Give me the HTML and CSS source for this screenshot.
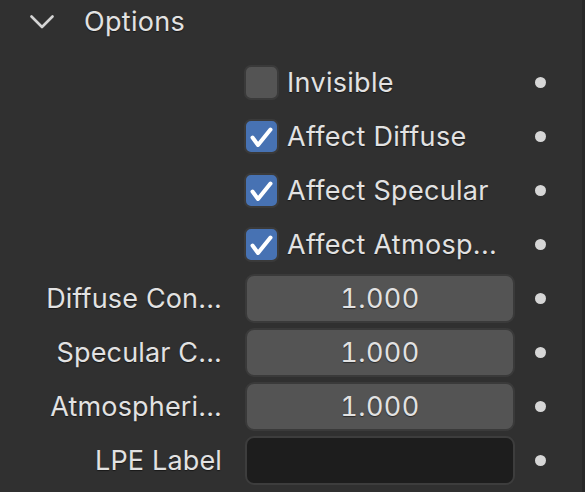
FILE: index.html
```html
<!DOCTYPE html>
<html>
<head>
<meta charset="utf-8">
<link rel="stylesheet" href="styles.css">
</head>
<body>
<div class="panel">
  <div class="header">
    <svg class="chev" width="24" height="14" viewBox="0 0 24 14"><path d="M1.5 1.5 L12 12 L22.5 1.5" fill="none" stroke="#d4d4d4" stroke-width="2.6" stroke-linecap="round" stroke-linejoin="round"/></svg>
    <span class="title">Options</span>
  </div>
  <div class="props">
    <div class="row">
      <div class="label"></div>
      <div class="ctrl check"><span class="cb"></span><span class="cbtext">Invisible</span></div>
      <span class="dot"></span>
    </div>
    <div class="row">
      <div class="label"></div>
      <div class="ctrl check"><span class="cb on"><svg width="35" height="35" viewBox="0 0 35 35"><path d="M8.5 18.5 L14 26 L26.5 10.5" fill="none" stroke="#fff" stroke-width="4" stroke-linecap="round" stroke-linejoin="round"/></svg></span><span class="cbtext">Affect Diffuse</span></div>
      <span class="dot"></span>
    </div>
    <div class="row">
      <div class="label"></div>
      <div class="ctrl check"><span class="cb on"><svg width="35" height="35" viewBox="0 0 35 35"><path d="M8.5 18.5 L14 26 L26.5 10.5" fill="none" stroke="#fff" stroke-width="4" stroke-linecap="round" stroke-linejoin="round"/></svg></span><span class="cbtext">Affect Specular</span></div>
      <span class="dot"></span>
    </div>
    <div class="row">
      <div class="label"></div>
      <div class="ctrl check"><span class="cb on"><svg width="35" height="35" viewBox="0 0 35 35"><path d="M8.5 18.5 L14 26 L26.5 10.5" fill="none" stroke="#fff" stroke-width="4" stroke-linecap="round" stroke-linejoin="round"/></svg></span><span class="cbtext">Affect Atmosp...</span></div>
      <span class="dot"></span>
    </div>
    <div class="row">
      <div class="label">Diffuse Con...</div>
      <div class="ctrl field">1.000</div>
      <span class="dot"></span>
    </div>
    <div class="row">
      <div class="label">Specular C...</div>
      <div class="ctrl field">1.000</div>
      <span class="dot"></span>
    </div>
    <div class="row">
      <div class="label">Atmospheri...</div>
      <div class="ctrl field">1.000</div>
      <span class="dot"></span>
    </div>
    <div class="row">
      <div class="label">LPE Label</div>
      <div class="ctrl field text"></div>
      <span class="dot"></span>
    </div>
  </div>
</div>
</body>
</html>
```
FILE: styles.css
```css
html, body {
  margin: 0;
  padding: 0;
  background: #303030;
}
body {
  width: 585px;
  height: 492px;
  overflow: hidden;
  font-family: Inter, "Noto Sans", sans-serif;
  font-size: 27px;
  letter-spacing: 0.3px;
  color: #e2e2e2;
}
.panel {
  width: 582px;
  height: 492px;
  border-right: 3px solid #282828;
  background: #303030;
}
.header {
  display: flex;
  align-items: center;
  height: 42px;
  margin-bottom: 13px;
}
.chev {
  margin-left: 30px;
  margin-top: 1px;
}
.title {
  margin-left: 30px;
  text-shadow: 0 1px 1px rgba(0,0,0,0.5);
}
.row {
  display: grid;
  grid-template-columns: 245px 270px 11px;
  align-items: center;
  height: 54px;
}
.label {
  text-align: right;
  padding-right: 23px;
  white-space: nowrap;
  letter-spacing: 0.15px;
  text-shadow: 0 1px 1px rgba(0,0,0,0.5);
}
.check {
  display: flex;
  align-items: center;
  white-space: nowrap;
}
.cb {
  box-sizing: border-box;
  width: 35px;
  height: 35px;
  border-radius: 7px;
  background: #545454;
  border: 2px solid #3a3a3a;
  flex: none;
  position: relative;
  margin-left: -1px;
}
.cb.on {
  background: #4772b3;
}
.cb svg {
  position: absolute;
  left: -2px;
  top: -2px;
}
.cbtext {
  margin-left: 8px;
  text-shadow: 0 1px 1px rgba(0,0,0,0.5);
}
.field {
  box-sizing: border-box;
  height: 49px;
  border-radius: 9px;
  background: #545454;
  border: 2px solid #3a3a3a;
  display: flex;
  align-items: center;
  justify-content: center;
  font-variant-numeric: tabular-nums;
  letter-spacing: 0.4px;
  text-shadow: 0 1px 1px rgba(0,0,0,0.5);
}
.field.text {
  background: #1d1d1d;
  border-color: #3d3d3d;
}
.dot {
  width: 11px;
  height: 11px;
  border-radius: 50%;
  background: #d6d6d6;
  margin-left: 20px;
}
```
